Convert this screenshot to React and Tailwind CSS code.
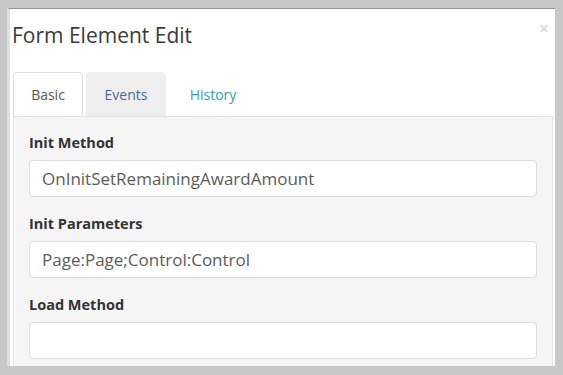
import React from 'react';

function Field({ label, value }) {
  return (
    <div>
      <div className="text-[14.5px] font-bold text-[#333] leading-[20px]">{label}</div>
      <div className="mt-[7px] h-[37px] rounded-[4px] border border-[#dcdcdc] bg-white px-[12px] flex items-center text-[17px] text-[#5c5c5c]">
        {value}
      </div>
    </div>
  );
}

export default function App() {
  const fields = [
    { label: 'Init Method', value: 'OnInitSetRemainingAwardAmount' },
    { label: 'Init Parameters', value: 'Page:Page;Control:Control' },
    { label: 'Load Method', value: '' },
  ];

  return (
    <div
      className="w-[563px] h-[375px] bg-[#c8c8c8] pl-[7px] pt-[8px] overflow-hidden"
      style={{ fontFamily: '"Open Sans", "Liberation Sans", sans-serif' }}
    >
      <div className="w-[548px] h-[358px] bg-white border-t border-[#8e9696] border-l-[3px] border-l-[#e0e0e0] overflow-hidden">
        <div className="flex items-start justify-between pl-[2px] pr-[6px] pt-[13px]">
          <h1 className="text-[21px] text-[#3a3a3a] leading-[26px]">Form Element Edit</h1>
          <span className="text-[#d0d0d0] text-[18px] leading-none mt-[-3px]">×</span>
        </div>

        <div className="flex pl-[3px] mt-[24px] text-[14px]">
          <div className="w-[70px] h-[44px] bg-white border border-b-0 border-[#ddd] rounded-t-[4px] flex items-center justify-center text-[#555]">
            Basic
          </div>
          <div className="ml-[3px] w-[80px] h-[44px] bg-[#eee] rounded-t-[4px] flex items-center justify-center text-[#4b6d8c]">
            Events
          </div>
          <div className="w-[94px] h-[44px] flex items-center justify-center text-[#3b9bab]">
            History
          </div>
        </div>

        <div className="ml-[3px] w-[540px] h-[260px] bg-[#f5f5f5] border border-[#dde3e6] px-[15px] pt-[16px] flex flex-col gap-[17px]">
          {fields.map((f) => (
            <Field key={f.label} label={f.label} value={f.value} />
          ))}
        </div>
      </div>
    </div>
  );
}
